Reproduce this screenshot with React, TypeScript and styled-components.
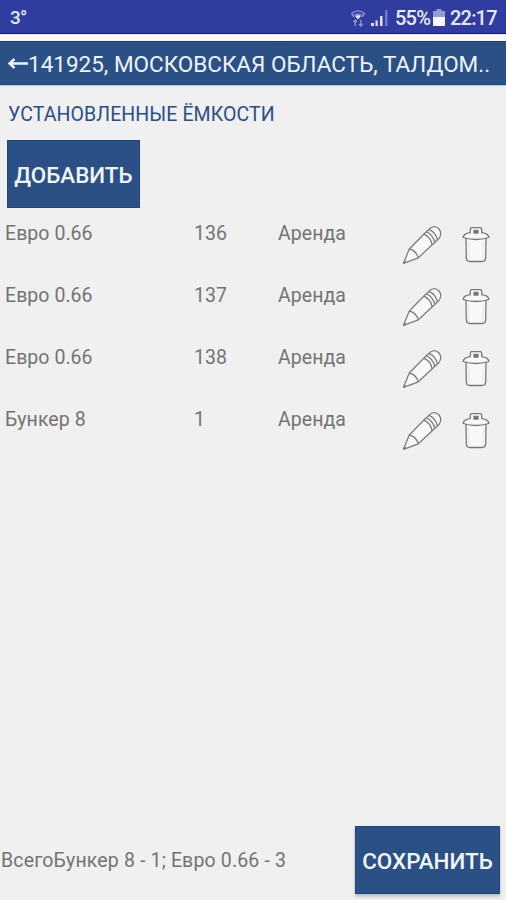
import React from "react";
import styled, { createGlobalStyle } from "styled-components";

const GlobalStyle = createGlobalStyle`
  * { box-sizing: border-box; }
  body { margin: 0; background: #f0f0f0; font-family: Roboto, "Liberation Sans", sans-serif; }
`;

const Screen = styled.div`
  width: 506px;
  height: 900px;
  display: flex;
  flex-direction: column;
  background: #f0f0f0;
  overflow: hidden;
`;

const StatusBar = styled.div`
  height: 34px;
  flex: none;
  display: flex;
  align-items: center;
  padding: 2px 9px 0 10px;
  background: #303c9f;
  border-bottom: 1px solid #0c108a;
  color: #e9ebfa;
`;

const Temperature = styled.span`
  flex: 1;
  font-size: 19px;
  font-weight: 500;
  letter-spacing: -0.8px;
`;

const StatusText = styled.span<{ $width: number }>`
  width: ${(p) => p.$width}px;
  font-size: 20px;
  font-weight: 500;
  letter-spacing: -0.8px;
  white-space: nowrap;
`;

const Glyph = styled.svg<{ $gap: number }>`
  display: block;
  flex: none;
  margin-right: ${(p) => p.$gap}px;
`;

const TitleBar = styled.header`
  height: 44px;
  flex: none;
  margin-top: 7px;
  display: flex;
  align-items: center;
  padding: 2px 0 0 8px;
  background: #2b5085;
  color: #eef4fb;
  box-shadow: 0 -6px 0 #f7f7f9, 0 1px 1px #b9cfe0, inset 0 1px 0 #20466f, inset 0 -1px 0 #204a78;
`;

const Address = styled.h1`
  margin: 0;
  font-size: 22.5px;
  font-weight: 400;
  letter-spacing: 0;
  white-space: nowrap;
`;

const SectionTitle = styled.h2`
  margin: 18px 0 0 8px;
  height: 24px;
  line-height: 24px;
  font-size: 19.5px;
  font-weight: 400;
  letter-spacing: 0.1px;
  color: #294f88;
`;

const ActionButton = styled.button<{ $width: number }>`
  width: ${(p) => p.$width}px;
  height: 68px;
  flex: none;
  padding: 1px 0 0;
  border: 1px solid #204779;
  background: #2b5085;
  color: #f1f6fd;
  font: 500 22.4px Roboto, "Liberation Sans", sans-serif;
  white-space: nowrap;
`;

const AddButton = styled(ActionButton)`
  margin: 13px 0 0 7px;
`;

const SaveButton = styled(ActionButton)`
  box-shadow: 0 2px 3px rgba(0, 0, 0, 0.25);
`;

const List = styled.main`
  flex: 1;
  margin-top: 6px;
`;

const Row = styled.div`
  height: 62px;
  display: grid;
  grid-template-columns: 189px 84px 124px 59px 1fr;
  padding-left: 5px;
  color: #747474;
`;

const Cell = styled.span`
  padding-top: 8px;
  font-size: 19.5px;
  line-height: 24px;
  letter-spacing: 0.05px;
`;

const IconButton = styled.button`
  display: flex;
  width: 40px;
  height: 42px;
  margin-top: 10px;
  padding: 0;
  border: 0;
  background: none;
`;

const Footer = styled.footer`
  height: 74px;
  flex: none;
  display: flex;
  align-items: flex-start;
  justify-content: space-between;
  padding-right: 6px;
`;

const Summary = styled.span`
  padding: 23px 0 0 1px;
  font-size: 19.5px;
  line-height: 24px;
  letter-spacing: 0.15px;
  color: #747474;
  white-space: nowrap;
`;

const WifiIcon = () => (
  <Glyph $gap={5} width="16" height="18" viewBox="0 0 16 18" fill="none" stroke="#8e96d6" strokeWidth="1.4">
    <path d="M1.5 4.5Q8-.8 14.5 4.5L12 8M1.5 4.5L4 8" />
    <path d="M4 6.3Q8 3.5 12 6.3" />
    <path d="M5 7Q8 5.2 11 7L8 10.5Z" fill="#e6e9fa" stroke="none" />
    <path d="M5.2 11v6M3.5 13l1.7-2 1.7 2M10.8 11v6M9.1 15l1.7 2 1.7-2" />
  </Glyph>
);

const SignalIcon = () => (
  <Glyph $gap={7} width="17" height="18" viewBox="0 0 17 18">
    <path d="M0 14h3v3H0zM4.5 11.5h2.2V17H4.5zM9 7h2.5v10H9z" fill="#dfe3f8" />
    <path d="M14 1h2.5v16H14z" fill="#6f79c5" />
  </Glyph>
);

const BatteryIcon = () => (
  <Glyph $gap={5} width="12" height="17" viewBox="0 0 12 17">
    <path d="M3.5 0h5v2H12v6H0V2h3.5z" fill="#949bd3" />
    <path d="M0 8h12v9H0z" fill="#f5f7ff" />
  </Glyph>
);

const BackArrow = () => (
  <Glyph $gap={0} width="20" height="16" viewBox="0 0 20 16" fill="none" stroke="#eef4fb" strokeWidth="2.4">
    <path d="M20 7.5H2M6.5 3L1.5 7.5L6.5 12" />
  </Glyph>
);

const PencilIcon = () => (
  <svg width="40" height="42" viewBox="0 0 40 42" fill="none" stroke="#7d7d7d" strokeWidth="1.3" strokeLinejoin="round">
    <path
      d="M1.5 39.3L7.3 25L22.7 9.3L28.5 4Q33 .8 37 5Q40.5 9.5 37 14.5L30 21L16.3 33.8Z"
      fill="#f8f8f8"
    />
    <path d="M7.3 25Q14 26.5 16.3 33.8" />
    <path d="M1.5 39.3L2.6 36.5L4.3 38.2Z" fill="#7d7d7d" strokeWidth=".5" />
    <path d="M21.8 10.2Q28.5 13 30.2 20.8M24.4 7.8Q31 10.5 32.8 18.4M27 5.4Q33.7 8.2 35.4 16" />
  </svg>
);

const TrashIcon = () => (
  <svg width="32" height="42" viewBox="0 0 32 42" fill="#f8f8f8" stroke="#777" strokeWidth="1.3" strokeLinejoin="round">
    <path d="M5 14L5.3 33.5Q5.5 37.5 9 37.5H21Q24.5 37.5 24.7 33.5L25 14Z" />
    <path d="M9.3 8.7V5.2Q9.3 3.7 10.8 3.7H19.2Q20.7 3.7 20.7 5.2V8.7Q27.5 9.5 27.8 13.5Q15 17.5 2.2 13.5Q2.5 9.5 9.3 8.7Z" />
    <path d="M13 9V6.5H17V9ZM13 7.7H17" />
    <path d="M7.5 18L8 35M22.5 18L22 35" stroke="#e0e0e0" strokeWidth=".8" />
  </svg>
);

const containers = [
  { name: "Евро 0.66", number: "136", terms: "Аренда" },
  { name: "Евро 0.66", number: "137", terms: "Аренда" },
  { name: "Евро 0.66", number: "138", terms: "Аренда" },
  { name: "Бункер 8", number: "1", terms: "Аренда" },
];

export default function App() {
  return (
    <Screen>
      <GlobalStyle />
      <StatusBar>
        <Temperature>3°</Temperature>
        <WifiIcon />
        <SignalIcon />
        <StatusText $width={38}>55%</StatusText>
        <BatteryIcon />
        <StatusText $width={47}>22:17</StatusText>
      </StatusBar>
      <TitleBar>
        <BackArrow />
        <Address>141925, МОСКОВСКАЯ ОБЛАСТЬ, ТАЛДОМ..</Address>
      </TitleBar>
      <SectionTitle>УСТАНОВЛЕННЫЕ ЁМКОСТИ</SectionTitle>
      <AddButton $width={133}>ДОБАВИТЬ</AddButton>
      <List>
        {containers.map((item) => (
          <Row key={item.number}>
            <Cell>{item.name}</Cell>
            <Cell>{item.number}</Cell>
            <Cell>{item.terms}</Cell>
            <IconButton aria-label="Изменить"><PencilIcon /></IconButton>
            <IconButton aria-label="Удалить"><TrashIcon /></IconButton>
          </Row>
        ))}
      </List>
      <Footer>
        <Summary>ВсегоБункер 8 - 1; Евро 0.66 - 3</Summary>
        <SaveButton $width={145}>СОХРАНИТЬ</SaveButton>
      </Footer>
    </Screen>
  );
}
